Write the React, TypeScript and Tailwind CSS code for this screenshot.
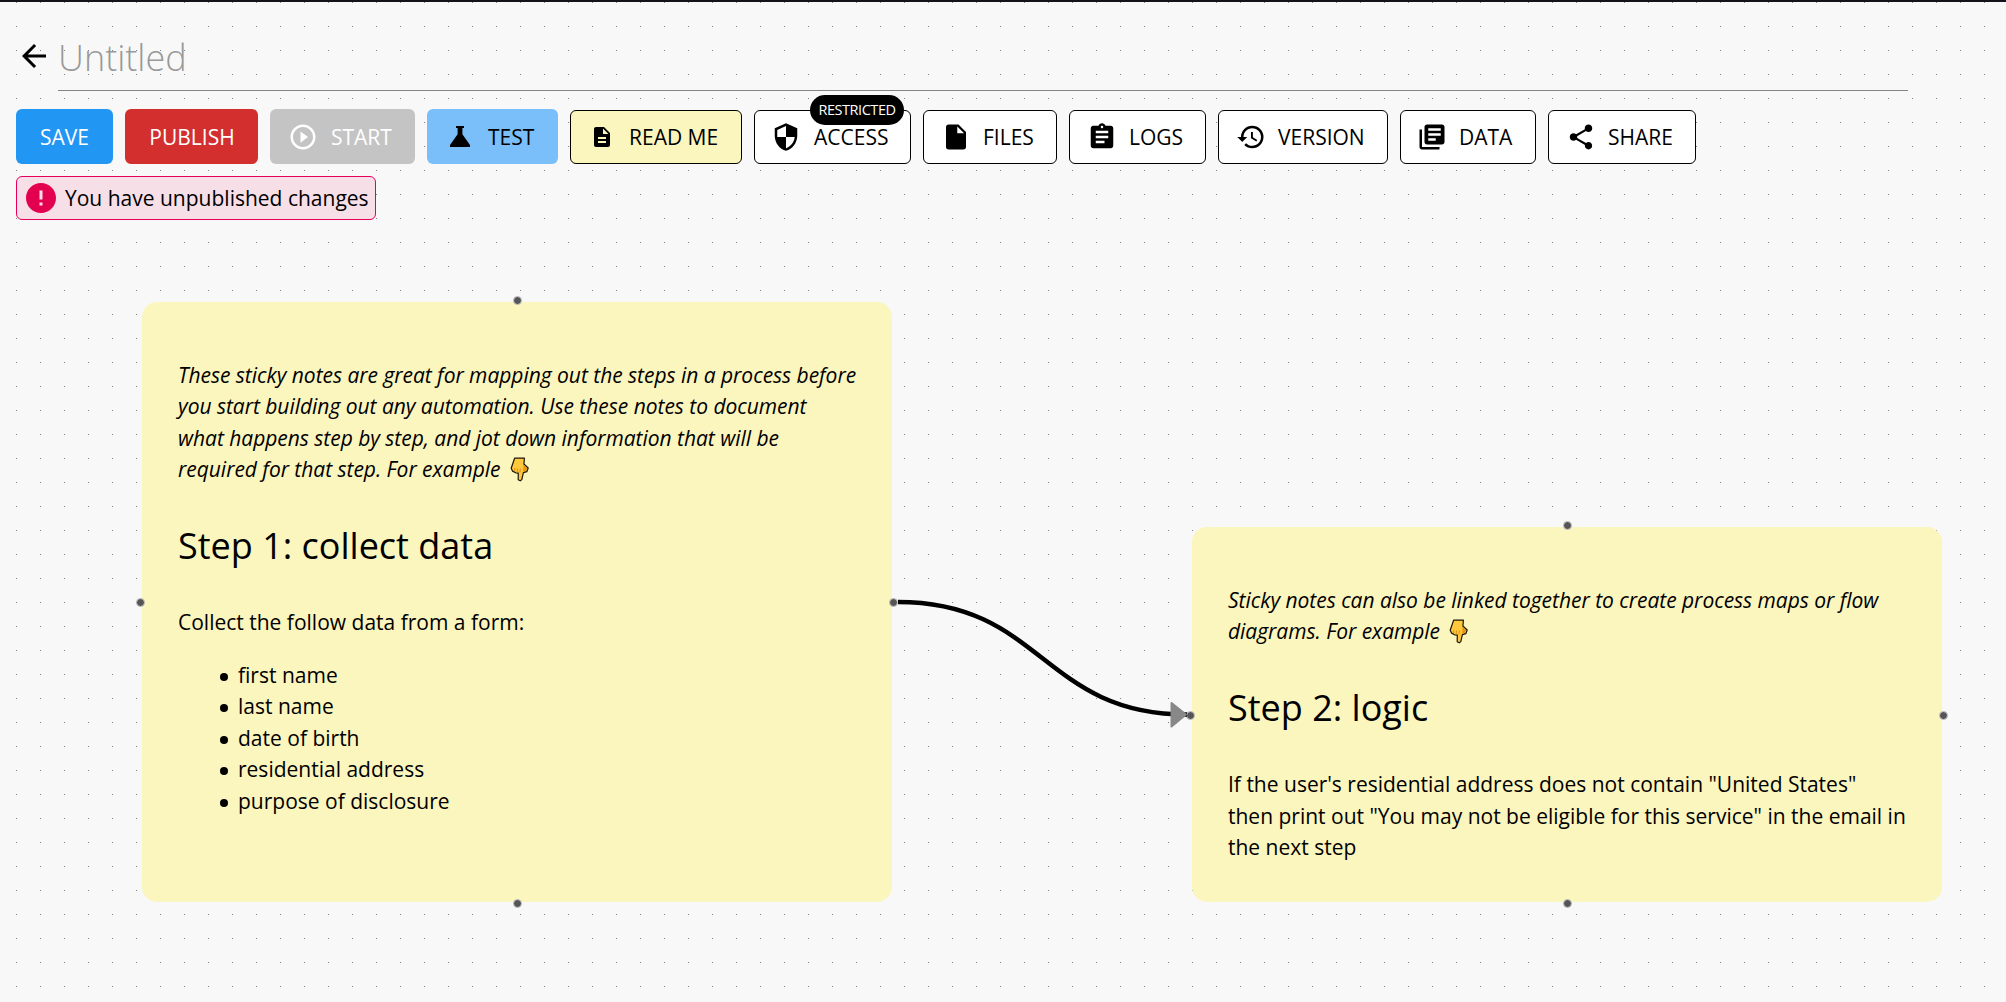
import {
  MdArrowBack, MdPlayCircleOutline, MdDescription, MdSecurity, MdInsertDriveFile,
  MdAssignment, MdHistory, MdLibraryBooks, MdShare, MdError,
} from 'react-icons/md';
import type { ReactNode } from 'react';

function Flask() {
  return (
    <svg viewBox="0 0 20 21" className="h-[21px] w-5" fill="currentColor">
      <path d="M6 0h8v2h-1.600v6.200L20 19v2H0v-2L7.600 8.200V2H6z" />
    </svg>
  );
}

function PointDown() {
  return (
    <svg viewBox="0 0 19 25" className="ml-[4px] inline-block h-[25px] w-[19px] align-[-5px]">
      <path d="M4.600 1.200h9.800l-.5 5.800 4.300 4-1.400 3.700-3.400.9-1.600 7-1.500 1.200-2.100-1 .1-6.600-2.600-.4-3.200-1.700-1.300-2.800z" fill="#ffc83d" stroke="#1c1608" strokeWidth="1.200" strokeLinejoin="round" />
      <path d="M13.500 8l3.500 3.400-1 2.400-2.800.7z" fill="#e6930f" />
      <path d="M4.900 11l-.4 3M7.500 11.500l-.3 3.700M10.300 11.500l-.4 4" stroke="#d67d00" strokeWidth=".8" fill="none" />
    </svg>
  );
}

type ToolProps = { label: string; icon?: ReactNode; className: string; badge?: string };

function Tool({ label, icon, className, badge }: ToolProps) {
  return (
    <button className={`relative flex shrink-0 items-center rounded-[6px] text-[21px] leading-none ${className}`}>
      {icon && <span className="flex w-[30px] shrink-0 items-center justify-center">{icon}</span>}
      <span className="pt-px whitespace-nowrap">{label}</span>
      {badge && (
        <span className="absolute -top-4 right-[6px] flex h-[30px] w-[94px] items-center justify-center rounded-full bg-black text-[14.5px] tracking-[-0.45px] text-white">
          {badge}
        </span>
      )}
    </button>
  );
}

const outlined = 'h-[54px] gap-[12px] border border-black bg-white pl-[17px]';

function Handle({ className }: { className: string }) {
  return <span className={`absolute size-[9px] rounded-full border border-[#c8c8c8] bg-[#555] ${className}`} />;
}

function Note({ className, children }: { className: string; children: ReactNode }) {
  return (
    <article className={`absolute w-[750px] rounded-[15px] bg-[#fbf5be] px-9 pt-[57.5px] text-[21px] leading-[31.5px] ${className}`}>
      {children}
      <Handle className="-top-[6px] left-[371px]" />
      <Handle className="-bottom-[6px] left-[371px]" />
      <Handle className="-left-[6px] top-[calc(50%-4px)]" />
      <Handle className="-right-[6px] top-[calc(50%-4px)]" />
    </article>
  );
}

const fields = ['first name', 'last name', 'date of birth', 'residential address', 'purpose of disclosure'];

export default function App() {
  return (
    <div className="relative h-[1002px] w-[2006px] overflow-hidden bg-[#f8f8f8] font-['Open_Sans',sans-serif] text-black">
      <svg className="absolute inset-0 h-full w-full">
        <defs>
          <pattern id="grid" x="16" y="2" width="24" height="24" patternUnits="userSpaceOnUse">
            <rect width="1" height="1" fill="#818181" />
          </pattern>
        </defs>
        <rect width="100%" height="100%" fill="url(#grid)" />
      </svg>

      <header className="relative flex flex-col">
        <div className="h-0.5 bg-[#15121c]" />
        <div className="flex h-[89px] items-start pl-4">
          <MdArrowBack className="mt-[36px] size-9" />
          <div className="ml-[6px] flex h-[89px] w-[1850px] items-start border-b border-[#858585] pt-[32px]">
            <span className="text-[36px] leading-[48px] font-light text-[#999]">Untitled</span>
          </div>
        </div>
        <nav className="mt-[18px] flex items-end gap-3 pl-4">
          <Tool label="SAVE" className="h-[55px] w-[97px] justify-center bg-[#2196f3] text-white" />
          <Tool label="PUBLISH" className="h-[55px] w-[133px] justify-center bg-[#d32f2f] pl-px text-white" />
          <Tool label="START" icon={<MdPlayCircleOutline className="size-[30px]" />} className="h-[55px] w-[145px] gap-[13px] bg-[#c4c4c4] pl-[18px] text-white" />
          <Tool label="TEST" icon={<Flask />} className="h-[55px] w-[131px] gap-[13px] bg-[#7abffa] pl-[18px]" />
          <Tool label="READ ME" icon={<MdDescription className="size-6" />} className={`${outlined} w-[172px] bg-[#fbf5be]! pl-[16px]!`} />
          <Tool label="ACCESS" icon={<MdSecurity className="size-[30px]" />} className={`${outlined} w-[157px] gap-[13px]! pl-[16px]!`} badge="RESTRICTED" />
          <Tool label="FILES" icon={<MdInsertDriveFile className="size-[30px]" />} className={`${outlined} w-[134px]`} />
          <Tool label="LOGS" icon={<MdAssignment className="size-[30px]" />} className={`${outlined} w-[137px]`} />
          <Tool label="VERSION" icon={<MdHistory className="size-[30px]" />} className={`${outlined} w-[170px]`} />
          <Tool label="DATA" icon={<MdLibraryBooks className="size-[30px]" />} className={`${outlined} w-[136px] pl-[16px]!`} />
          <Tool label="SHARE" icon={<MdShare className="size-[30px]" />} className={`${outlined} w-[148px]`} />
        </nav>
        <div className="mt-3 ml-4 flex h-11 w-[360px] items-center rounded-[6px] border border-[#e6005c] bg-[#f7dfe8] pl-[6px] text-[21px]">
          <MdError className="size-9 text-[#e3004f]" />
          <span className="ml-[6px] pt-0.5 whitespace-nowrap">You have unpublished changes</span>
        </div>
      </header>

      <main>
        <Note className="top-[302px] left-[142px] h-[600px]">
          <p className="tracking-[-0.03px] whitespace-nowrap italic">
            These sticky notes are great for mapping out the steps in a process before<br />
            you start building out any automation. Use these notes to document<br />
            what happens step by step, and jot down information that will be<br />
            required for that step. For example <PointDown />
          </p>
          <h1 className="my-[33.5px] text-[36px] leading-[54px]">Step 1: collect data</h1>
          <p>Collect the follow data from a form:</p>
          <ul className="mt-[21.5px] pl-[42px]">
            {fields.map((field) => (
              <li key={field} className="flex items-center gap-[10px]">
                <span className="mt-[3px] size-2 rounded-full bg-black" />
                {field}
              </li>
            ))}
          </ul>
        </Note>
        <Note className="top-[527px] left-[1192px] h-[375px]">
          <p className="tracking-[-0.03px] whitespace-nowrap italic">
            Sticky notes can also be linked together to create process maps or flow<br />
            diagrams. For example <PointDown />
          </p>
          <h1 className="my-[33.5px] text-[36px] leading-[54px]">Step 2: logic</h1>
          <p className="pt-[0.5px] whitespace-nowrap">
            If the user's residential address does not contain "United States"<br />
            then print out "You may not be eligible for this service" in the email in<br />
            the next step
          </p>
        </Note>
        <svg className="pointer-events-none absolute inset-0 h-full w-full" fill="none">
          <path d="M898 602C1042.500 602 1042.500 714.500 1187 714.500" stroke="#000" strokeWidth="4.500" />
          <path d="M1171.500 703L1186 714.500L1171.500 726.500Z" fill="#888" stroke="#888" strokeWidth="2" strokeLinejoin="round" />
        </svg>
      </main>
    </div>
  );
}
